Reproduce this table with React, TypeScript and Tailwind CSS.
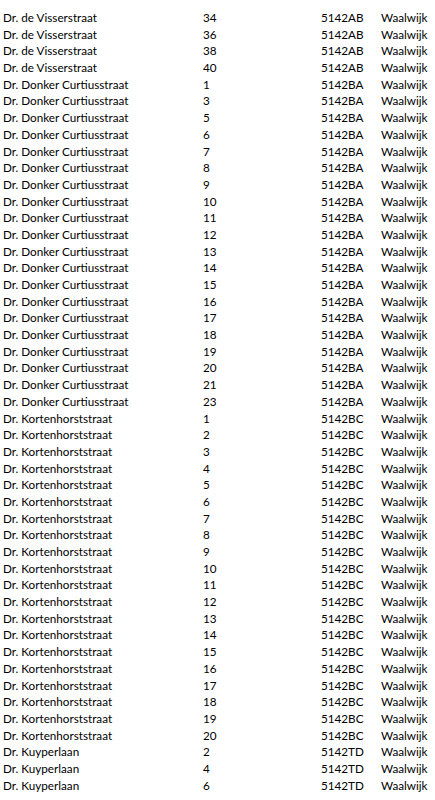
const rows: [string, string, string][] = [
  ["Dr. de Visserstraat", "34", "5142AB"],
  ["Dr. de Visserstraat", "36", "5142AB"],
  ["Dr. de Visserstraat", "38", "5142AB"],
  ["Dr. de Visserstraat", "40", "5142AB"],
  ...["1", "3", "5", "6", "7", "8", "9", "10", "11", "12", "13", "14", "15", "16", "17", "18", "19", "20", "21", "23"].map(
    (n) => ["Dr. Donker Curtiusstraat", n, "5142BA"] as [string, string, string]
  ),
  ...Array.from({ length: 20 }, (_, i) => ["Dr. Kortenhorststraat", String(i + 1), "5142BC"] as [string, string, string]),
  ["Dr. Kuyperlaan", "2", "5142TD"],
  ["Dr. Kuyperlaan", "4", "5142TD"],
  ["Dr. Kuyperlaan", "6", "5142TD"],
];

export default function App() {
  return (
    <div
      className="w-[435px] h-[800px] bg-white text-black overflow-hidden pt-[9px] pl-[3px]"
      style={{ fontFamily: "Lato, 'Open Sans', sans-serif" }}
    >
      {rows.map((r, i) => (
        <div key={i} className="grid grid-cols-[200px_118px_60px_1fr] h-[16.7px] text-[11.7px] leading-[16.7px] whitespace-nowrap">
          <div>{r[0]}</div>
          <div>{r[1]}</div>
          <div>{r[2]}</div>
          <div>Waalwijk</div>
        </div>
      ))}
    </div>
  );
}
